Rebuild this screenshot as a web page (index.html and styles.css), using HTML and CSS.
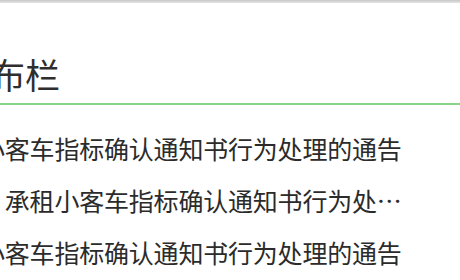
FILE: index.html
```html
<!DOCTYPE html>
<html lang="zh-CN">

<head>
    <meta charset="UTF-8">
    <meta name="viewport" content="width=device-width, initial-scale=1.0">
    <title>信息发布栏</title>
    <link rel="stylesheet" href="styles.css">
</head>

<body>
    <div class="topbar"></div>

    <div class="panel">
        <h2 class="panel-title">信息发布栏</h2>

        <ul class="news-list">
            <li>小客车指标确认通知书行为处理的通告</li>
            <li>　承租小客车指标确认通知书行为处理的通告</li>
            <li>小客车指标确认通知书行为处理的通告</li>
        </ul>
    </div>
</body>

</html>
```

FILE: styles.css
```css
body {
    margin: 0;
    background-color: #ffffff;
    font-family: "Noto Sans CJK SC", "Noto Sans", sans-serif;
    color: #2b2b2b;
    overflow: hidden;
}

.topbar {
    height: 3px;
    background: linear-gradient(#c8c8c8, #e4e4e4);
}

.panel {
    margin-left: -115px;
}

.panel-title {
    margin: 0;
    padding: 49px 0 8px 0;
    font-size: 35px;
    font-weight: normal;
    line-height: 43px;
    color: #2e2e2e;
    border-bottom: 2px solid #8ad48a;
}

.news-list {
    list-style: none;
    margin: 17px 0 0 0;
    padding: 0 0 0 95px;
    width: 424px;
}

.news-list li {
    font-size: 25px;
    letter-spacing: -0.2px;
    line-height: 52px;
    white-space: nowrap;
    overflow: hidden;
    text-overflow: ellipsis;
}
```
